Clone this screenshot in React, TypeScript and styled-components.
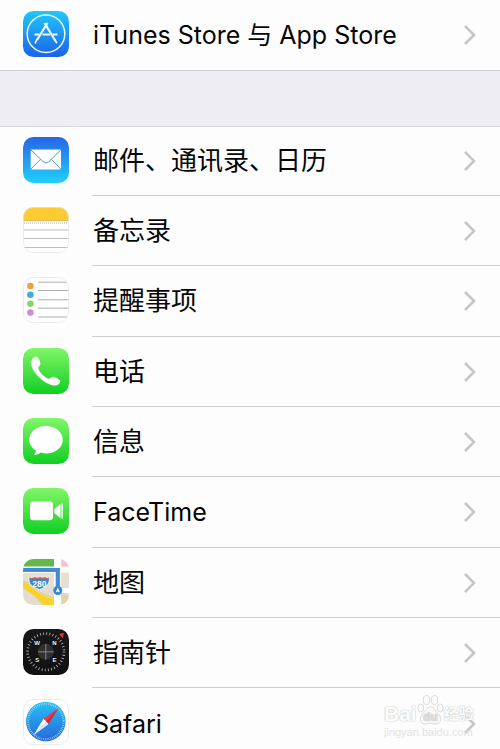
import React from "react";
import styled, { createGlobalStyle } from "styled-components";

const GlobalStyle = createGlobalStyle`
  * { box-sizing: border-box; }
  html, body { margin: 0; background: #fdfdfd; }
  body {
    height: 100vh;
    overflow: hidden;
    font-family: Inter, "Noto Sans CJK SC", sans-serif;
    color: #050505;
  }
`;

const Page = styled.main`
  position: relative;
  height: 100vh;
  overflow: hidden;
`;

const List = styled.ul<{ $separated?: boolean }>`
  list-style: none;
  margin: 0;
  padding: 0;

  > li:first-child { --row-height: ${(p) => (p.$separated ? "69px" : "70px")}; }
  > li:nth-child(3n) { --row-height: 71px; }
`;

const Gap = styled.div`
  height: 57px;
  background: #efedf4;
  border-top: 1px solid #cfced3;
  border-bottom: 1px solid #dad7dd;
`;

const Row = styled.button`
  display: flex;
  align-items: stretch;
  width: 100%;
  height: var(--row-height, 70px);
  padding: 0 0 0 23px;
  border: 0;
  background: transparent;
  color: inherit;
  font: inherit;
  text-align: left;
`;

const IconCell = styled.span`
  display: flex;
  align-items: center;
  flex: none;
  width: 69px;
  padding-bottom: 3px;
`;

const Content = styled.span<{ $line: boolean }>`
  display: flex;
  flex: 1;
  align-items: center;
  justify-content: space-between;
  padding-right: 23px;
  border-bottom: ${(p) => (p.$line ? "1px solid #d0d0d3" : "0")};
`;

const Label = styled.span<{ $latin: boolean }>`
  font-size: ${(p) => (p.$latin ? "25px" : "26px")};
  line-height: 36px;
  padding-left: 1px;
  white-space: nowrap;
`;

const Watermark = styled.div`
  position: absolute;
  right: 24px;
  bottom: 11px;
  width: 92px;
  color: #fcfcfc;
  pointer-events: none;
  text-shadow: 0 0 1px #bdbdbd, 0 0 2px #d4d4d4;
`;

const Brand = styled.div`
  display: flex;
  align-items: flex-end;
  height: 34px;
  font: 700 21px/24px "Liberation Sans", "Noto Sans CJK SC", sans-serif;
`;

const Chinese = styled.span`
  font-size: 15px;
`;

const Site = styled.div`
  color: #e2e2e2;
  font: 11px/12px "Liberation Sans", sans-serif;
  text-shadow: none;
`;

function Tile({ children, id, top, bottom, edge }: {
  children: React.ReactNode; id: string; top: string; bottom: string; edge?: boolean;
}) {
  return (
    <svg width="46" height="46" viewBox="0 0 46 46" aria-hidden="true">
      <defs>
        <linearGradient id={`${id}-fill`} x1="0" y1="0" x2="0" y2="1">
          <stop offset="0" stopColor={top} />
          <stop offset="1" stopColor={bottom} />
        </linearGradient>
        <clipPath id={`${id}-clip`}><rect width="46" height="46" rx="10.5" /></clipPath>
      </defs>
      <g clipPath={`url(#${id}-clip)`}>
        <rect width="46" height="46" fill={`url(#${id}-fill)`} />
        {children}
      </g>
      {edge && <rect x=".5" y=".5" width="45" height="45" rx="10" fill="none" stroke="#e6e6e6" strokeWidth=".8" />}
    </svg>
  );
}

const StoreIcon = () => (
  <Tile id="store" top="#20c8fa" bottom="#1d62e8">
    <g fill="none" stroke="#e9fbff">
      <circle cx="23" cy="22.7" r="18.8" strokeWidth="1.5" />
      <path d="M11.500 23.500h5M19.500 23.500h7.500M29.500 23.500h5" strokeWidth="2" />
      <path d="M24.500 12 14 29M21.500 12 32.500 30" strokeWidth="2.200" />
      <path d="m13.800 28.500-1.500 3.300M32 29l1.500 2.700" strokeWidth="1.600" strokeLinecap="round" />
    </g>
  </Tile>
);

const MailIcon = () => (
  <Tile id="mail" top="#2765e8" bottom="#20cffb">
    <rect x="7.700" y="12.500" width="30.300" height="20" rx="1" fill="#fff" />
    <g fill="none" stroke="#4b9fc5" strokeWidth="1">
      <path d="m8 13 12 11.500q3 3 6 0L37.800 13M8 32l9.500-9.700M37.800 32l-9.500-9.700" />
    </g>
  </Tile>
);

const NotesIcon = () => (
  <Tile id="notes" top="#fff" bottom="#fff" edge>
    <rect width="46" height="13.500" fill="#fbcb2f" />
    <path d="M0 13.700h46" stroke="#cda83b" strokeWidth=".8" />
    <path d="M1 16h44" stroke="#aaa" strokeWidth="1" strokeDasharray="1 1" />
    <path d="M0 23h46M0 31.500h46M0 40.500h46" stroke="#bcbcbc" strokeWidth="1" />
  </Tile>
);

const RemindersIcon = () => (
  <Tile id="reminders" top="#fff" bottom="#fff" edge>
    <path d="M15 5.200h29M15 13.500h31M15 22.800h31M15 31.200h31M15 40h29" stroke="#a4a4a4" strokeWidth=".9" />
    <circle cx="7.400" cy="9" r="3.300" fill="#efa03f" />
    <circle cx="7.400" cy="17.700" r="3.300" fill="#42ace0" />
    <circle cx="7.400" cy="26.800" r="3.300" fill="#85d66d" />
    <circle cx="7.400" cy="35.600" r="3.300" fill="#cb8ede" />
  </Tile>
);

const PhoneIcon = () => (
  <Tile id="phone" top="#82f568" bottom="#10cf22">
    <path
      d="M9.200 11.200c1.500-2.300 3.500-3.200 4.900-2.300 1.900 1.200 3.300 5.100 3.400 6.800 0 1.700-2.500 2.600-2.300 4.400.6 3.800 6.700 9.700 10.100 10.500 1.900.5 3.100-2 4.900-1.900 1.800.1 5.400 2.200 6.700 3.600 1.500 1.700-1.600 5.100-4.200 5.300C22.800 38 7 22.800 8.100 14.200c.1-1.100.5-2.100 1.100-3z"
      fill="#fff"
    />
  </Tile>
);

const MessagesIcon = () => (
  <Tile id="messages" top="#82f568" bottom="#10cf22">
    <path
      d="M23 8C13.500 8 6.300 14 6.300 21.700c0 4.500 2.600 8.300 6.700 10.900-.2 1.900-.9 3.100-2.200 4.500 2.600.1 4.900-.9 6.700-2.500 1.700.5 3.600.8 5.500.8 9.500 0 16.700-6 16.700-13.700S32.500 8 23 8z"
      fill="#fff"
    />
  </Tile>
);

const FaceTimeIcon = () => (
  <Tile id="facetime" top="#82f568" bottom="#10cf22">
    <rect x="7" y="13.500" width="23" height="18.800" rx="3.200" fill="#fff" />
    <path d="M31.300 21.300 37.500 16v14.300l-6.200-5.300zM38.400 15.500h1.400v15.300h-1.400z" fill="#fff" />
  </Tile>
);

const MapsIcon = () => (
  <Tile id="maps" top="#e9e2d4" bottom="#e1dbd0">
    <path d="M0 0h31v8H0z" fill="#62b84a" />
    <path d="M0 7.500h31V14H0zM31 0h7v46h-7zM37 7.500h9v6h-9zM37 29h9v5h-9z" fill="#fff" />
    <path d="M38.500 0H46v7.500h-7.500z" fill="#f2c4d1" />
    <path d="M0 23.500c5 0 7 3 11 6.500 7 6 12 8 20 10v6H20C14 39 8 34 0 29z" fill="#fbd22b" />
    <path d="M0 22.700c6 0 8 3.800 12 7 6 5 11 7 19 9" fill="none" stroke="#e5c552" strokeWidth=".8" />
    <path d="m38.500 34 7.500 3v9h-7.500z" fill="#dfd5a9" />
    <path d="M0 11h34.800v20" fill="none" stroke="#418bd8" strokeWidth="4.200" />
    <path d="M6.500 18.500q3 1 5-.5 3 1.300 5.500 0 2 1.500 5 0 2 1.500 4 .5c1.500 5.500-2 9.500-9.500 12-7.500-2.300-12-6-10-12z" fill="#348bcc" stroke="#fff" strokeWidth=".8" />
    <path d="M6.500 18.500q3 1 5-.5 3 1.300 5.500 0 2 1.500 5 0 2 1.500 4 .5v2H6.500z" fill="#b96472" />
    <text x="16.300" y="28" textAnchor="middle" fill="#fff" fontFamily="Liberation Sans, sans-serif" fontSize="8.500" fontWeight="700">280</text>
    <circle cx="34.800" cy="31.500" r="4.500" fill="#3285d3" />
    <path d="m34.800 28.600 2.200 5-2.200-1.100-2.200 1.100z" fill="#fff" />
  </Tile>
);

const CompassIcon = () => (
  <Tile id="compass" top="#18181b" bottom="#111114">
    <circle cx="22.800" cy="22.800" r="18.200" fill="none" stroke="#bcbcbc" strokeWidth="2.600" strokeDasharray=".8 2.377" />
    <circle cx="22.800" cy="22.800" r="8" fill="#303033" />
    <path d="M15 22.800h15.600M22.800 15v15.600" stroke="#9a9a9d" strokeWidth=".8" />
    <g fill="#eee" fontFamily="Liberation Sans, sans-serif" fontSize="6" fontWeight="700" textAnchor="middle">
      <text x="14.200" y="15.800">W</text>
      <text x="31.500" y="15.800">N</text>
      <text x="14.200" y="33.200">S</text>
      <text x="31.500" y="33.200">E</text>
    </g>
    <path d="m36 5 5-1-1.200 5z" fill="#ea3836" />
  </Tile>
);

const SafariIcon = () => (
  <Tile id="safari" top="#fff" bottom="#fff" edge>
    <defs>
      <linearGradient id="safari-dial" x1="0" y1="0" x2="0" y2="1">
        <stop offset="0" stopColor="#26c0f4" />
        <stop offset="1" stopColor="#2568d9" />
      </linearGradient>
    </defs>
    <circle cx="22.800" cy="22.500" r="19.800" fill="url(#safari-dial)" />
    <circle cx="22.800" cy="22.500" r="17.700" fill="none" stroke="#bde7ff" strokeWidth="2" strokeDasharray=".6 1.253" />
    <path d="m35.500 9-15 10.800 4.900 5.200z" fill="#ef3b44" />
    <path d="m35.500 9-12.600 13.500 2.500 2.500z" fill="#c62d42" />
    <path d="m10.700 36 9.800-16.200 4.900 5.200z" fill="#fff" />
    <path d="m10.700 36 12.200-13.500 2.500 2.500z" fill="#d8e5f2" />
  </Tile>
);

const Chevron = () => (
  <svg width="14" height="22" viewBox="0 0 14 22" aria-hidden="true">
    <path d="m2 2 9 9-9 9" fill="none" stroke="#c6c6ca" strokeWidth="2.600" />
  </svg>
);

const Paw = () => (
  <svg width="27" height="32" viewBox="0 0 27 32" aria-hidden="true">
    <g fill="#fbfbfb" stroke="#dadada">
      <ellipse cx="3.800" cy="14" rx="3" ry="4" />
      <ellipse cx="9.500" cy="6" rx="3.200" ry="4.500" />
      <ellipse cx="17.500" cy="6" rx="3.200" ry="4.500" />
      <ellipse cx="23.200" cy="14" rx="3" ry="4" />
      <path d="M13.500 13c-4 0-4.500 4-7.500 6.500-4 3.500-3.500 10.500 2 10.500 2.500 0 3.500-.7 5.500-.7s3 .7 5.500.7c5.500 0 6-7 2-10.500-3-2.500-3.500-6.500-7.500-6.500z" />
    </g>
    <text x="13.500" y="27" textAnchor="middle" fill="#dedede" fontFamily="Liberation Sans, sans-serif" fontSize="12" fontWeight="700">du</text>
  </svg>
);

const storeItems = [{ label: "iTunes Store 与 App Store", Icon: StoreIcon, latin: true }];

const appItems = [
  { label: "邮件、通讯录、日历", Icon: MailIcon, latin: false },
  { label: "备忘录", Icon: NotesIcon, latin: false },
  { label: "提醒事项", Icon: RemindersIcon, latin: false },
  { label: "电话", Icon: PhoneIcon, latin: false },
  { label: "信息", Icon: MessagesIcon, latin: false },
  { label: "FaceTime", Icon: FaceTimeIcon, latin: true },
  { label: "地图", Icon: MapsIcon, latin: false },
  { label: "指南针", Icon: CompassIcon, latin: false },
  { label: "Safari", Icon: SafariIcon, latin: true },
];

function SettingsList({ items, separated }: { items: typeof appItems; separated?: boolean }) {
  return (
    <List $separated={separated}>
      {items.map(({ label, Icon, latin }, index) => (
        <li key={label}>
          <Row type="button">
            <IconCell><Icon /></IconCell>
            <Content $line={index < items.length - 1}>
              <Label $latin={latin}>{label}</Label>
              <Chevron />
            </Content>
          </Row>
        </li>
      ))}
    </List>
  );
}

export default function App() {
  return (
    <>
      <GlobalStyle />
      <Page lang="zh-CN">
        <SettingsList items={storeItems} />
        <Gap />
        <SettingsList items={appItems} separated />
        <Watermark>
          <Brand><span>Bai</span><Paw /><Chinese>经验</Chinese></Brand>
          <Site>jingyan.baidu.com</Site>
        </Watermark>
      </Page>
    </>
  );
}
